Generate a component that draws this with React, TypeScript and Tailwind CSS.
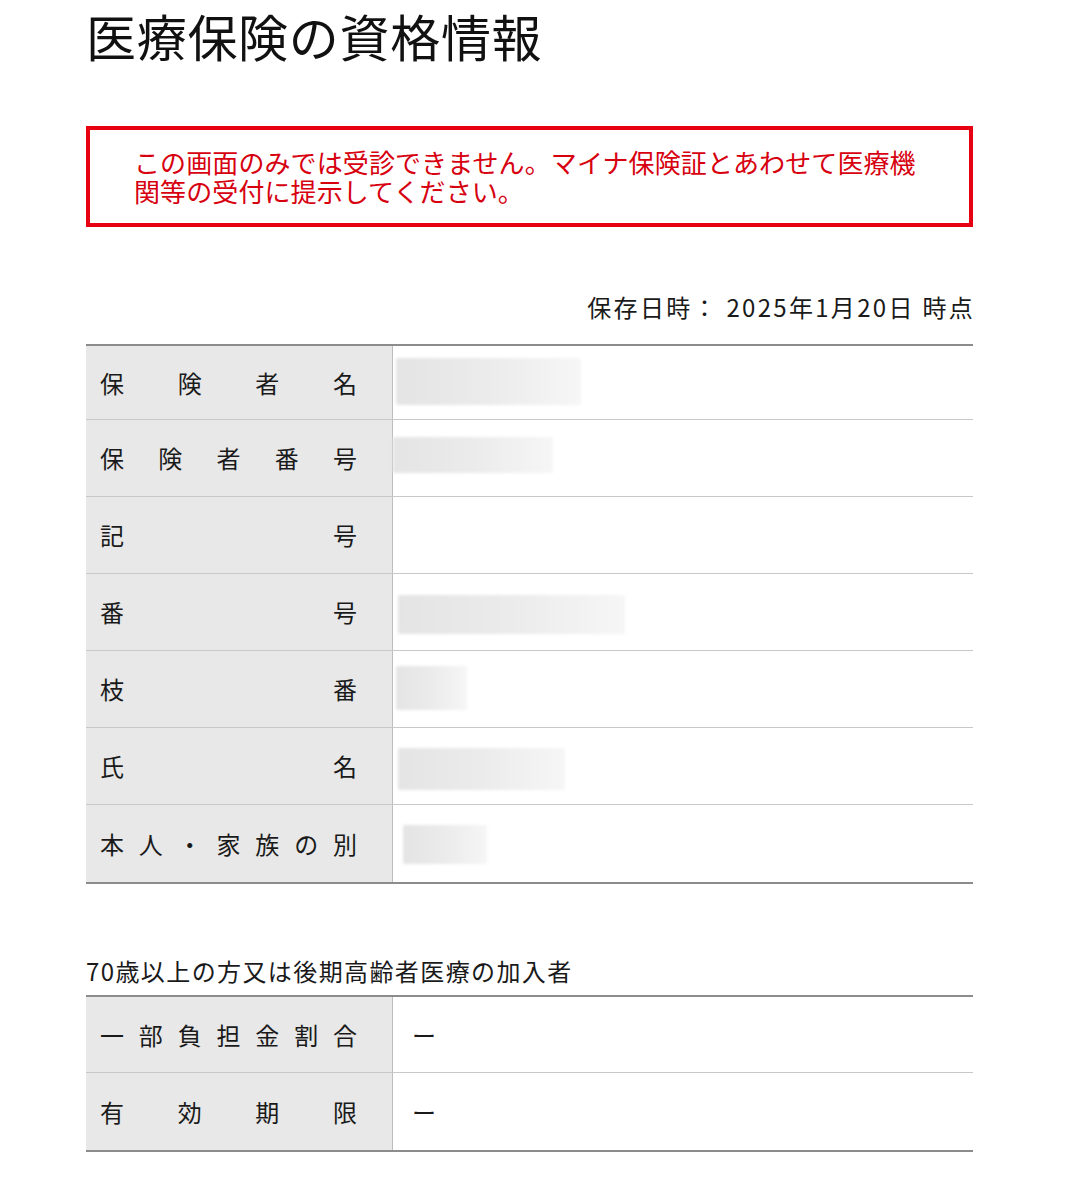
const jp = { fontFamily: '"Noto Sans CJK JP", "Noto Sans", sans-serif' };

type Row = {
  label: string;
  value?: string;
  blur?: string;
};

const mainRows: Row[] = [
  { label: '保険者名', blur: 'ml-[3px] w-[185px] h-[47px] mt-[-2px]' },
  { label: '保険者番号', blur: 'ml-0 w-[160px] h-[36px] mt-[-6px]' },
  { label: '記号' },
  { label: '番号', blur: 'ml-[5px] w-[227px] h-[39px] mt-[4px]' },
  { label: '枝番', blur: 'ml-[3px] w-[71px] h-[44px] mt-[-2px]' },
  { label: '氏名', blur: 'ml-[5px] w-[167px] h-[42px] mt-[6px]' },
  { label: '本人・家族の別', blur: 'ml-[10px] w-[84px] h-[39px] mt-[2px]' },
];

const elderRows: Row[] = [
  { label: '一部負担金割合', value: 'ー' },
  { label: '有効期限', value: 'ー' },
];

function InfoTable({ rows, firstRow }: { rows: Row[]; firstRow: string }) {
  return (
    <div className="border-t-2 border-b-2 border-[#8c8c8c]">
      {rows.map((row, i) => (
        <div
          key={row.label}
          className={`flex ${i === 0 ? firstRow : 'h-[77px]'} ${i < rows.length - 1 ? 'border-b border-[#c8c8c8]' : ''}`}
        >
          {/* 見出しセル（均等割り付け） */}
          <div className="w-[307px] shrink-0 bg-[#e8e8e8] border-r border-[#bdbdbd] flex items-center justify-between pl-[14px] pr-[35px] text-[24px] text-[#1a1a1a]">
            {row.label.split('').map((ch, j) => (
              <span key={j}>{ch}</span>
            ))}
          </div>
          <div className="flex-1 flex items-center">
            {row.blur && (
              <div
                className={`${row.blur} rounded-[2px] bg-gradient-to-r from-[#e4e4e4] via-[#ebebeb] to-[#f6f6f6] blur-[1.5px]`}
              />
            )}
            {row.value && (
              <span className="pl-[19px] text-[24px] text-[#1a1a1a]">{row.value}</span>
            )}
          </div>
        </div>
      ))}
    </div>
  );
}

export default function App() {
  return (
    <div className="min-h-[1182px] bg-white" style={jp}>
      <div className="ml-[86px] w-[887px] pb-[28px]">
        <h1 className="text-[50px] leading-[70px] tracking-[0.7px] text-[#111] font-normal">
          医療保険の資格情報
        </h1>

        {/* 注意書き */}
        <div className="mt-[56px] border-[4px] border-[#e60012] pl-[44px] pr-[40px] pt-[17px] pb-[18px]">
          <p className="text-[26px] leading-[29px] tracking-[0.1px] text-[#d7000f]">
            この画面のみでは受診できません。マイナ保険証とあわせて医療機関等の受付に提示してください。
          </p>
        </div>

        <div className="mt-[64px] text-right text-[24px] leading-[32px] tracking-[2.3px] -mr-[2px] text-[#1a1a1a]">
          保存日時： 2025年1月20日 時点
        </div>

        <div className="mt-[21px]">
          <InfoTable rows={mainRows} firstRow="h-[74px]" />
        </div>

        <div className="mt-[71px] text-[24px] leading-[32px] tracking-[1.4px] text-[#1a1a1a]">
          70歳以上の方又は後期高齢者医療の加入者
        </div>

        <div className="mt-[8px]">
          <InfoTable rows={elderRows} firstRow="h-[76px]" />
        </div>
      </div>
    </div>
  );
}
